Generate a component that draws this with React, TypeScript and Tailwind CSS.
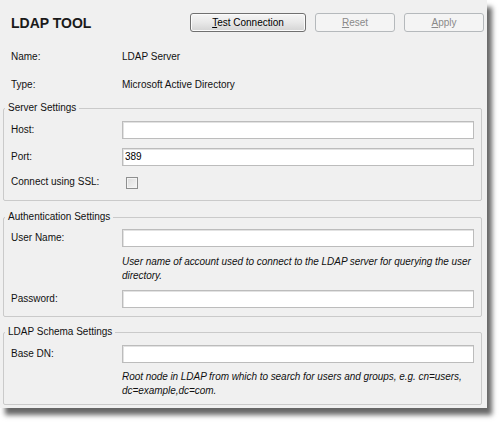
import React from "react";

const font = { fontFamily: '"Liberation Sans", Arial, sans-serif' };

function Btn({ accel, rest, disabled, w }: { accel: string; rest: string; disabled?: boolean; w: string }) {
  return (
    <button
      className={
        disabled
          ? `${w} h-[19px] rounded-[3px] border border-[#b5b9bc] bg-[#f4f4f4] text-[10px] leading-none text-[#8a8a8a]`
          : `${w} h-[19px] rounded-[3px] border border-[#707070] bg-gradient-to-b from-[#f6f6f6] via-[#e8e8e8] to-[#d4d4d4] text-[10px] leading-none text-[#000] shadow-[inset_0_0_0_1px_#fbfbfb]`
      }
    >
      <span className="underline underline-offset-1">{accel}</span>
      {rest}
    </button>
  );
}

function Input({ value }: { value?: string }) {
  return (
    <div className="h-[18px] w-[352px] border border-[#bcbcbc] bg-white pl-[2px] text-[10px] leading-[16px] text-[#000] shadow-[inset_1px_1px_0_#e2e2e2]">
      {value}
    </div>
  );
}

function Row({ label, children }: { label: string; children: React.ReactNode }) {
  return (
    <div className="flex items-center">
      <div className="w-[111px] text-[10px] leading-[14px] text-[#111]">{label}</div>
      {children}
    </div>
  );
}

function Hint({ children }: { children: React.ReactNode }) {
  return (
    <div className="whitespace-nowrap pl-[111px] text-[10px] italic leading-[14px] tracking-[-0.05px] text-[#111]">
      {children}
    </div>
  );
}

function Group({ title, className, children }: { title: string; className: string; children: React.ReactNode }) {
  return (
    <fieldset className={`ml-[3px] w-[479px] rounded-[2px] border border-[#cacaca] ${className}`}>
      <legend className="ml-[1px] px-[3px] text-[10px] leading-[14px] text-[#111]">{title}</legend>
      {children}
    </fieldset>
  );
}

export default function App() {
  return (
    <div className="h-[425px] w-[502px] bg-white" style={font}>
      <div className="h-[408px] w-[487px] overflow-hidden bg-[#f0f0f0] shadow-[5px_7px_5px_rgba(0,0,0,0.6)]">
        <div className="flex items-center pl-[11px] pt-[13px]">
          <div className="w-[179px] text-[14px] font-bold leading-none text-[#1a1a1a]">LDAP TOOL</div>
          <div className="flex gap-[9px]">
            <Btn w="w-[116px]" accel="T" rest="est Connection" />
            <Btn w="w-[80px]" accel="R" rest="eset" disabled />
            <Btn w="w-[80px]" accel="A" rest="pply" disabled />
          </div>
        </div>

        <div className="mt-[18px] flex pl-[11px] text-[10px] leading-[14px] text-[#111]">
          <div className="w-[111px]">Name:</div>
          <div>LDAP Server</div>
        </div>
        <div className="mt-[14px] flex pl-[11px] text-[10px] leading-[14px] text-[#111]">
          <div className="w-[111px]">Type:</div>
          <div>Microsoft Active Directory</div>
        </div>

        <Group title="Server Settings" className="mt-[9px]">
          <div className="flex flex-col px-[7px] pb-[7px] pt-[6px]">
            <Row label="Host:">
              <Input />
            </Row>
            <div className="mt-[9px]">
              <Row label="Port:">
                <Input value="389" />
              </Row>
            </div>
            <div className="mt-[9px] h-[18px]">
              <Row label="Connect using SSL:">
                <span className="ml-[4px] mt-[2px] block h-[12px] w-[12px] border border-[#8e8f8f] bg-gradient-to-br from-[#dcdcdc] to-[#f6f6f6] shadow-[inset_0_0_0_1px_#f4f4f4]" />
              </Row>
            </div>
          </div>
        </Group>

        <Group title="Authentication Settings" className="mt-[9px]">
          <div className="flex flex-col px-[7px] pb-[8px] pt-[5px]">
            <Row label="User Name:">
              <Input />
            </Row>
            <div className="mt-[8px]">
              <Hint>
                User name of account used to connect to the LDAP server for querying the user
                <br />
                directory.
              </Hint>
            </div>
            <div className="mt-[7px]">
              <Row label="Password:">
                <Input />
              </Row>
            </div>
          </div>
        </Group>

        <Group title="LDAP Schema Settings" className="mt-[8px]">
          <div className="flex flex-col px-[7px] pb-[6px] pt-[6px]">
            <Row label="Base DN:">
              <Input />
            </Row>
            <div className="mt-[7px]">
              <Hint>
                Root node in LDAP from which to search for users and groups, e.g. cn=users,
                <br />
                dc=example,dc=com.
              </Hint>
            </div>
          </div>
        </Group>
      </div>
    </div>
  );
}
